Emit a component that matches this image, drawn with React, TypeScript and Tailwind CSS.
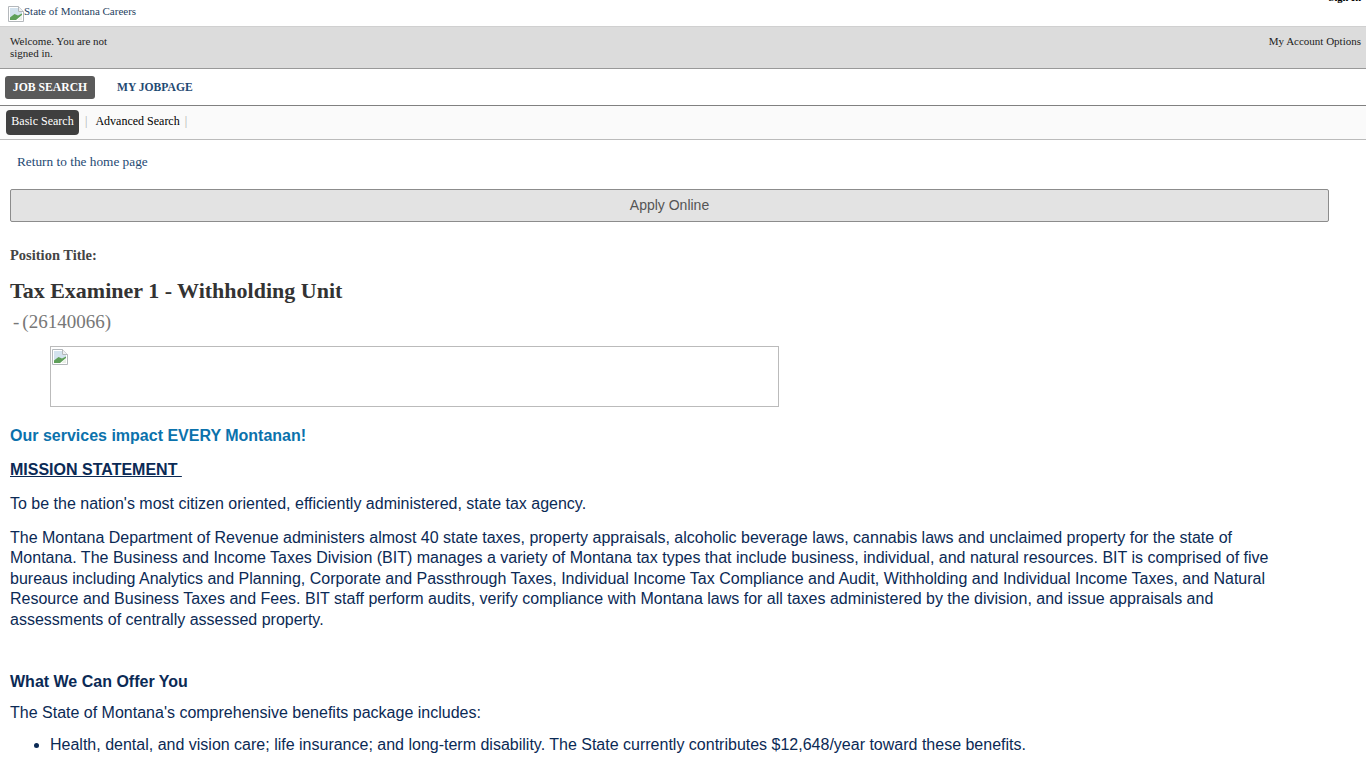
import React from 'react';

const serif = { fontFamily: '"Liberation Serif", "Times New Roman", serif' };

const BrokenImage = () => (
    <svg width="16" height="16" viewBox="0 0 16 16" className="shrink-0">
        <path d="M0.5 0.5H10.5L15.5 5.5V15.5H0.5Z" fill="#fff" stroke="#b4b8bc" />
        <path d="M10.5 0.5V5.5H15.5" fill="#eef0f2" stroke="#b4b8bc" />
        <path d="M2 2H10V6H14V9L2 12Z" fill="#d3e2ee" />
        <path d="M2 14V11.5L6.5 8L10 9.5L14 7.5V9L8 14Z" fill="#5fa05a" />
        <path d="M9.5 14L14 10V14Z" fill="#e9efe6" />
    </svg>
);

export default function App() {
    return (
        <div className="h-screen overflow-hidden bg-white text-[#0b2a55]" style={{ fontFamily: '"Liberation Sans", Arial, sans-serif' }}>
            {/* TOP */}
            <div className="relative h-[26px] pl-2 pt-[5px]" style={serif}>
                <div className="flex items-start text-[11px] leading-[13px] text-[#1f3f5f]">
                    <div className="pt-[1px]">
                        <BrokenImage />
                    </div>
                    <span>State of Montana Careers</span>
                </div>
                <span className="absolute right-[5px] top-[-8px] text-[10.5px] font-bold leading-[12px] text-black">Sign In</span>
            </div>

            {/* WELCOME BAR */}
            <div className="flex h-[43px] justify-between border-t border-b border-t-[#d0d0d0] border-b-[#999] bg-[#dcdcdc] pl-[10px] pr-[5px] pt-[8px] text-[11px] leading-[12px] text-[#222]" style={serif}>
                <div className="w-[110px]">Welcome. You are not signed in.</div>
                <div>My Account Options</div>
            </div>

            {/* MAIN NAV */}
            <div className="flex h-[37px] items-center border-b border-[#808080] pl-[5px]" style={serif}>
                <div className="flex h-[23px] w-[90px] items-center justify-center rounded-[3px] bg-[#5a5a5a] pt-[1px] text-[11.7px] font-bold text-white">JOB SEARCH</div>
                <div className="ml-[22px] pt-[1px] text-[11.6px] font-bold text-[#1f4a73]">MY JOBPAGE</div>
            </div>

            {/* SUB NAV */}
            <div className="flex h-[34px] items-center border-b border-[#bbb] bg-[#fafafa] pb-[3px] pl-[6px] text-[12px]" style={serif}>
                <div className="-mb-[3px] flex h-[25px] w-[73px] items-center justify-center rounded-[4px] bg-[#3f3f3f] pb-[3px] text-white">Basic Search</div>
                <span className="ml-[6px] text-[#aaa]">|</span>
                <span className="ml-[8px] text-black">Advanced Search</span>
                <span className="ml-[5px] text-[#aaa]">|</span>
            </div>

            {/* CONTENT */}
            <div className="pl-[10px]">
                <div className="pl-[7px] pt-[14px] text-[13.3px] leading-[15px] text-[#1f4a73]" style={serif}>Return to the home page</div>

                <button className="mt-[20px] flex h-[33px] w-[1319px] items-center justify-center rounded-[2px] border border-[#8c8c8c] bg-[#e3e3e3] text-[14px] text-[#555]">Apply Online</button>

                <div className="mt-[25px] text-[14.5px] font-bold leading-[16px] text-[#444]" style={serif}>Position Title:</div>
                <div className="mt-[16px] text-[22px] font-bold leading-[24px] text-[#333]" style={serif}>Tax Examiner 1 - Withholding Unit</div>
                <div className="mt-[9px] flex text-[19px] leading-[20px] text-[#777]" style={serif}>
                    <span className="ml-[3px] mr-[3px]">-</span>
                    <span>(26140066)</span>
                </div>

                <div className="ml-[40px] mt-[14px] h-[61px] w-[729px] border border-[#bbb] pl-[1px] pt-[2px]">
                    <BrokenImage />
                </div>

                <div className="w-[1270px] text-[16px] leading-[20.5px]">
                    <p className="mt-[19px] font-bold text-[#0b72ac]">Our services impact EVERY Montanan!</p>
                    <p className="mt-[13px] font-bold underline">MISSION STATEMENT&nbsp;</p>
                    <p className="mt-[14px]">To be the nation's most citizen oriented, efficiently administered, state tax agency.</p>
                    <p className="mt-[13px]">The Montana Department of Revenue administers almost 40 state taxes, property appraisals, alcoholic beverage laws, cannabis laws and unclaimed property for the state of Montana. The Business and Income Taxes Division (BIT) manages a variety of Montana tax types that include business, individual, and natural resources. BIT is comprised of five bureaus including Analytics and Planning, Corporate and Passthrough Taxes, Individual Income Tax Compliance and Audit, Withholding and Individual Income Taxes, and Natural Resource and Business Taxes and Fees. BIT staff perform audits, verify compliance with Montana laws for all taxes administered by the division, and issue appraisals and assessments of centrally assessed property.</p>
                    <p className="mt-[42px] font-bold">What We Can Offer You</p>
                    <p className="mt-[10px]">The State of Montana's comprehensive benefits package includes:</p>
                    <ul className="mt-[12px] list-disc pl-[40px]">
                        <li>Health, dental, and vision care; life insurance; and long-term disability. The State currently contributes $12,648/year toward these benefits.</li>
                    </ul>
                </div>
            </div>
        </div>
    );
}
